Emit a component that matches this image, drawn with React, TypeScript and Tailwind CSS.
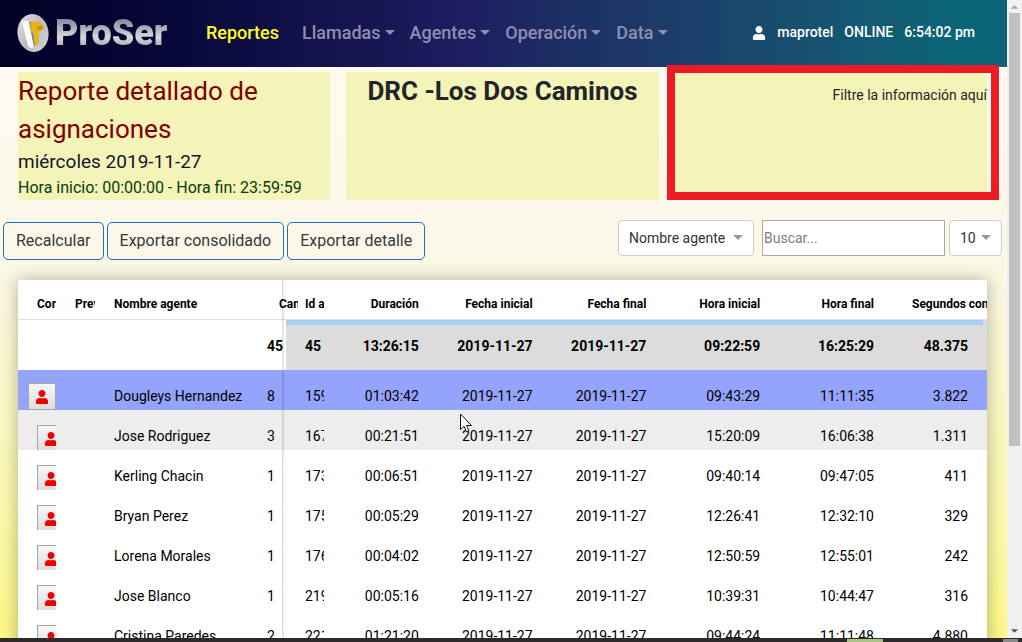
import React from "react";
import { FaUser } from "react-icons/fa";

type Agent = {
  name: string;
  count: string;
  id: string;
  values: string[];
};

const headers = ["Duración", "Fecha inicial", "Fecha final", "Hora inicial", "Hora final"];
const totals = ["13:26:15", "2019-11-27", "2019-11-27", "09:22:59", "16:25:29", "48.375"];

const agents: Agent[] = [
  { name: "Dougleys Hernandez", count: "8", id: "159", values: ["01:03:42", "2019-11-27", "2019-11-27", "09:43:29", "11:11:35", "3.822"] },
  { name: "Jose Rodriguez", count: "3", id: "167", values: ["00:21:51", "2019-11-27", "2019-11-27", "15:20:09", "16:06:38", "1.311"] },
  { name: "Kerling Chacin", count: "1", id: "173", values: ["00:06:51", "2019-11-27", "2019-11-27", "09:40:14", "09:47:05", "411"] },
  { name: "Bryan Perez", count: "1", id: "175", values: ["00:05:29", "2019-11-27", "2019-11-27", "12:26:41", "12:32:10", "329"] },
  { name: "Lorena Morales", count: "1", id: "176", values: ["00:04:02", "2019-11-27", "2019-11-27", "12:50:59", "12:55:01", "242"] },
  { name: "Jose Blanco", count: "1", id: "219", values: ["00:05:16", "2019-11-27", "2019-11-27", "10:39:31", "10:44:47", "316"] },
  { name: "Cristina Paredes", count: "2", id: "221", values: ["01:21:20", "2019-11-27", "2019-11-27", "09:44:24", "11:11:48", "4.880"] },
];

function Logo() {
  return (
    <a href="#" className="flex items-center gap-[6px]" aria-label="ProSer">
      <svg width="32" height="40" viewBox="0 0 32 40" aria-hidden="true">
        <defs>
          <linearGradient id="disc" x1="0" y1="0" x2="1" y2="1">
            <stop offset="0" stopColor="#e4e4e4" />
            <stop offset="0.5" stopColor="#bdbdc0" />
            <stop offset="1" stopColor="#d6d6d6" />
          </linearGradient>
        </defs>
        <ellipse cx="16" cy="20" rx="15.5" ry="19" fill="url(#disc)" transform="rotate(-8 16 20)" />
        <path d="M5 9 Q9 7 12 9 L17 34 Q13 36 11 33 Z" fill="#fafafa" />
        <path d="M12 9 L14.500 9 L18 33 L17 34 Z" fill="#7c7c80" />
        <path d="M13 10 Q18 7 24 9.500 Q26 14 23.500 18 L21.500 18.500 L22 31 Q19 33 17.500 31 L17 20 L14.500 19.500 Z" fill="#e6b512" />
        <path d="M20 13.500 L26 12.500 L26.500 16 L20.500 18 Z" fill="#c9980a" />
      </svg>
      <span className="bg-linear-to-b from-[#66667a] via-[#d8d8dc] via-60% to-[#80808e] bg-clip-text text-[36px] leading-[44px] font-black text-transparent">
        ProSer
      </span>
    </a>
  );
}

function Caret({ className = "" }: { className?: string }) {
  return (
    <svg width="10" height="5" viewBox="0 0 10 5" className={className} aria-hidden="true">
      <path d="M0 0 H10 L5 5 Z" fill="currentColor" />
    </svg>
  );
}

function Navbar() {
  return (
    <header className="flex h-[67px] items-center justify-between bg-linear-to-r from-[#020024] via-[#1d1c5e] via-45% to-[#0a6676] to-95% pr-8 pb-[2px] pl-[17px]">
      <div className="flex items-center">
        <div className="w-[189px]">
          <Logo />
        </div>
        <nav className="flex items-center gap-[15px] text-[18px] font-medium text-[#8f8eb0]">
          <a href="#" className="mr-2 text-[#ffff1c]">Reportes</a>
          {["Llamadas", "Agentes", "Operación", "Data"].map((item) => (
            <button key={item} type="button" className="flex items-center gap-1">
              {item}
              <Caret />
            </button>
          ))}
        </nav>
      </div>
      <div className="flex items-center gap-[11px] text-[14px] font-medium text-white">
        <FaUser size={14} />
        <span>maprotel</span>
        <span>ONLINE</span>
        <span>6:54:02 pm</span>
      </div>
    </header>
  );
}

function Summary() {
  return (
    <section className="grid grid-cols-3 gap-4 pt-[5px] pr-5 pl-[18px]">
      <div className="bg-[#f5f4b8]">
        <h1 className="text-[26px] leading-[38px] text-[#800000]">Reporte detallado de asignaciones</h1>
        <p className="text-[19px] leading-[27px] text-[#14142c]">miércoles 2019-11-27</p>
        <p className="text-[16px] leading-[25px] text-[#06400a]">Hora inicio: 00:00:00 - Hora fin: 23:59:59</p>
      </div>
      <div className="bg-[#f5f4b8] text-center">
        <h2 className="text-[26px] leading-[38px] font-bold text-[#212529]">DRC -Los Dos Caminos</h2>
      </div>
      <div className="relative bg-[#f5f4b8] pt-3 text-right text-[14px] leading-[22px] text-[#212529]">
        <p>Filtre la información aquí</p>
        <div className="pointer-events-none absolute -top-[7px] -right-3 bottom-0 -left-2 border-8 border-[#ec1c24]" />
      </div>
    </section>
  );
}

function Picker({ label, option, className }: { label: string; option: string; className: string }) {
  return (
    <div className="relative">
      <select
        aria-label={label}
        className={`h-9 appearance-none rounded border border-[#cccccc] bg-white pl-[10px] text-[14px] text-[#333333] ${className}`}
      >
        <option>{option}</option>
      </select>
      <Caret className="pointer-events-none absolute top-[15px] right-[11px] text-[#999999]" />
    </div>
  );
}

function Toolbar() {
  return (
    <section className="flex items-start justify-between pt-5 pr-[5px] pl-[3px]">
      <div className="flex gap-[3px] pt-[2px]">
        {["Recalcular", "Exportar consolidado", "Exportar detalle"].map((text) => (
          <button
            key={text}
            type="button"
            className="h-[38px] rounded-[5px] border border-[#1a73c8] px-3 text-[16px] leading-6 text-[#343a40]"
          >
            {text}
          </button>
        ))}
      </div>
      <div className="flex">
        <Picker label="Campo" option="Nombre agente" className="w-[136px]" />
        <input
          type="text"
          aria-label="Buscar"
          placeholder="Buscar..."
          className="mr-1 ml-2 h-9 w-[183px] border border-[#a9a9a9] bg-white px-px text-[14px] placeholder:text-[#7c7c7c]"
        />
        <Picker label="Filas por página" option="10" className="w-[53px]" />
      </div>
    </section>
  );
}

function DataTable() {
  return (
    <section className="relative mt-5 mr-5 ml-[18px] overflow-hidden bg-white shadow-[0_0_16px_rgba(0,0,0,0.3)]">
      <table className="w-full table-fixed border-collapse text-[14px] leading-5 whitespace-nowrap text-black">
        <colgroup>
          <col className="w-[38px]" />
          <col className="w-[39px]" />
          <col className="w-[153px]" />
          <col className="w-[38px]" />
          <col className="w-[38px]" />
          <col />
          <col />
          <col />
          <col />
          <col />
          <col className="w-[94px]" />
        </colgroup>
        <thead>
          <tr className="h-10 text-[12px] font-bold shadow-[inset_0_-1px_0_#e0e0e0]">
            <th className="overflow-hidden pt-2 pl-[19px] text-left">Correo</th>
            <th className="overflow-hidden pt-2 pl-[19px] text-left">Prev</th>
            <th className="pt-2 pl-[19px] text-left">Nombre agente</th>
            <th className="pt-2 pl-[31px] text-left">
              <div className="w-[19px] overflow-hidden">Cant</div>
            </th>
            <th className="pt-2 pl-[19px] text-left">
              <div className="w-[19px] overflow-hidden">Id a</div>
            </th>
            {headers.map((header) => (
              <th key={header} className="pt-2 pr-[19px] text-right">{header}</th>
            ))}
            <th className="overflow-hidden pt-2 pl-[19px] text-left">Segundos conversación</th>
          </tr>
        </thead>
        <tbody>
          <tr className="h-[50px] font-bold">
            <td />
            <td />
            <td />
            <td className="pt-[2px] pl-[19px]">45</td>
            <td className="bg-[#dcdcdc] pt-[2px] pl-[19px]">45</td>
            {totals.map((total, i) => (
              <td key={i} className="bg-[#dcdcdc] pt-[2px] pr-[19px] text-right">{total}</td>
            ))}
          </tr>
          {agents.map((agent, row) => (
            <tr
              key={agent.name}
              className={`h-10 ${row === 0 ? "bg-[#94a3fb]" : row === 1 ? "bg-[#ededed]" : "bg-white"}`}
            >
              <td className={`overflow-hidden p-0 ${row === 0 ? "pl-[10px]" : "pl-[19px]"}`}>
                <div className={`h-10 overflow-hidden ${row === 0 ? "pt-[13px]" : "pt-[15px]"}`}>
                  <button
                    type="button"
                    aria-label={`Ver a ${agent.name}`}
                    className="flex h-[27px] w-7 items-center justify-center border border-[#a5a5a5] bg-linear-to-b from-[#f6f6f6] to-[#dddddd]"
                  >
                    <FaUser size={14} className="text-[#f00000]" />
                  </button>
                </div>
              </td>
              <td />
              <td className="pt-3 pl-[19px]">{agent.name}</td>
              <td className="pt-3 pl-[19px]">{agent.count}</td>
              <td className="overflow-hidden pt-3 pl-[19px]">{agent.id}</td>
              {agent.values.map((value, i) => (
                <td key={i} className="pt-3 pr-[19px] text-right">{value}</td>
              ))}
            </tr>
          ))}
        </tbody>
      </table>
      <div className="pointer-events-none absolute top-10 right-1 left-[268px] h-[5px] bg-[#a9cff5]" />
      <div className="pointer-events-none absolute top-0 bottom-0 left-[264px] w-[3px] bg-linear-to-r from-black/15 to-transparent" />
    </section>
  );
}

function Scrollbar() {
  return (
    <div className="flex w-[15px] flex-none flex-col items-center justify-between bg-[#f1f1f1] text-[#505050]" aria-hidden="true">
      <div className="flex h-[13px] items-center">
        <Caret className="h-1 w-[7px] rotate-180 text-[#a3a3a3]" />
      </div>
      <div className="flex w-full flex-1 flex-col px-[2px]">
        <div className="h-[71%] bg-[#c1c1c1]" />
      </div>
      <div className="flex h-[15px] items-center">
        <Caret className="h-1 w-[7px]" />
      </div>
    </div>
  );
}

export default function App() {
  return (
    <div className="flex h-screen flex-col overflow-hidden font-[Roboto,sans-serif]">
      <div className="flex min-h-0 flex-1">
        <main className="min-w-0 flex-1 overflow-hidden bg-linear-to-b from-[#fdfaf4] via-[#fbf8e8] via-40% to-[#fdf888]">
          <Navbar />
          <Summary />
          <Toolbar />
          <DataTable />
        </main>
        <Scrollbar />
      </div>
      <div className="flex h-1 flex-none justify-end gap-[120px] bg-[#2e2a2b] pt-px pr-1" aria-hidden="true">
        <div className="w-9 bg-[#a9c47f]" />
        <div className="w-[15px] bg-[#8d8a8b]" />
      </div>
      <svg width="13" height="20" viewBox="0 0 13 20" className="pointer-events-none fixed top-[413px] left-[460px]" aria-hidden="true">
        <path d="M0.500 1 V16.500 L4 13.200 L6.500 19 L9 18 L6.600 12.500 H11.500 Z" fill="#ffffff" stroke="#111111" strokeWidth="1" />
      </svg>
    </div>
  );
}
